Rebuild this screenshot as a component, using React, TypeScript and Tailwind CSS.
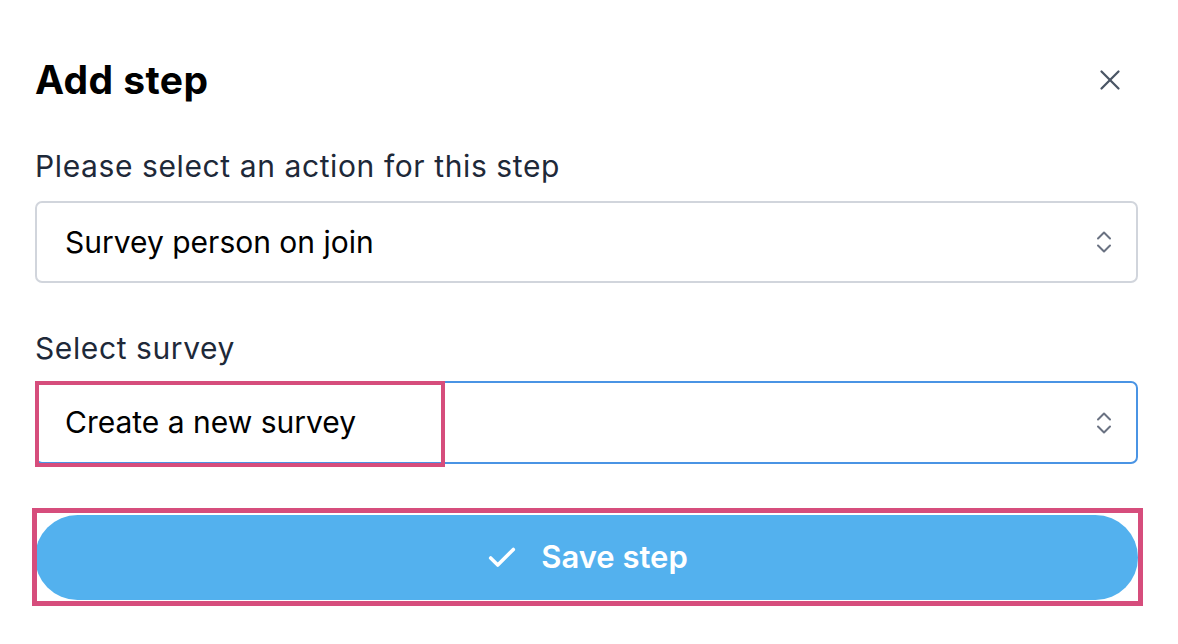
import { X, Check } from 'lucide-react';

const Chevrons = () => (
  <svg width="16" height="26" viewBox="0 0 16 26" fill="none" className="text-gray-500">
    <path d="M2 9.5 8 3.5l6 6" stroke="currentColor" strokeWidth="2" strokeLinecap="round" strokeLinejoin="round" />
    <path d="M2 16.5l6 6 6-6" stroke="currentColor" strokeWidth="2" strokeLinecap="round" strokeLinejoin="round" />
  </svg>
);

export default function App() {
  return (
    <div
      className="w-[1178px] h-[644px] bg-white pl-[35px] pr-[40px] pt-[58px]"
      style={{ fontFamily: 'Inter, "Noto Sans", sans-serif' }}
    >
      <div className="flex items-center justify-between h-[44px]">
        <h1 className="text-[39px] leading-[44px] font-bold text-black tracking-[0.4px]">Add step</h1>
        <button className="mr-[11px] text-gray-600">
          <X className="w-[34px] h-[34px]" strokeWidth={1.6} />
        </button>
      </div>

      <label className="block mt-[46px] text-[30px] leading-[36px] text-gray-800 tracking-[0.6px]">
        Please select an action for this step
      </label>
      <div className="mt-[17px] h-[82px] rounded-[7px] border-2 border-gray-300 flex items-center justify-between pl-[28px] pr-[24px]">
        <span className="text-[30px] text-black">Survey person on join</span>
        <Chevrons />
      </div>

      <label className="block mt-[47px] text-[30px] leading-[36px] text-gray-800 tracking-[0.6px]">Select survey</label>
      <div className="relative mt-[15px] h-[83px] rounded-[7px] border-2 border-[#4a94e4] flex items-center justify-between pl-[28px] pr-[24px]">
        <span className="text-[30px] text-black">Create a new survey</span>
        <Chevrons />
        <div className="absolute -left-[2px] -top-[2px] w-[410px] h-[86px] border-[4px] border-[#d64d7c] pointer-events-none" />
      </div>

      <div className="relative mt-[51px]">
        <button className="w-full h-[85px] rounded-full bg-[#53b1ee] text-white flex items-center justify-center gap-[22px]">
          <Check className="w-[34px] h-[34px]" strokeWidth={2.5} />
          <span className="text-[31px] font-semibold">Save step</span>
        </button>
        <div className="absolute -left-[3px] -top-[7px] -right-[5px] -bottom-[6px] border-[5px] border-[#d64d7c] pointer-events-none" />
      </div>
    </div>
  );
}
